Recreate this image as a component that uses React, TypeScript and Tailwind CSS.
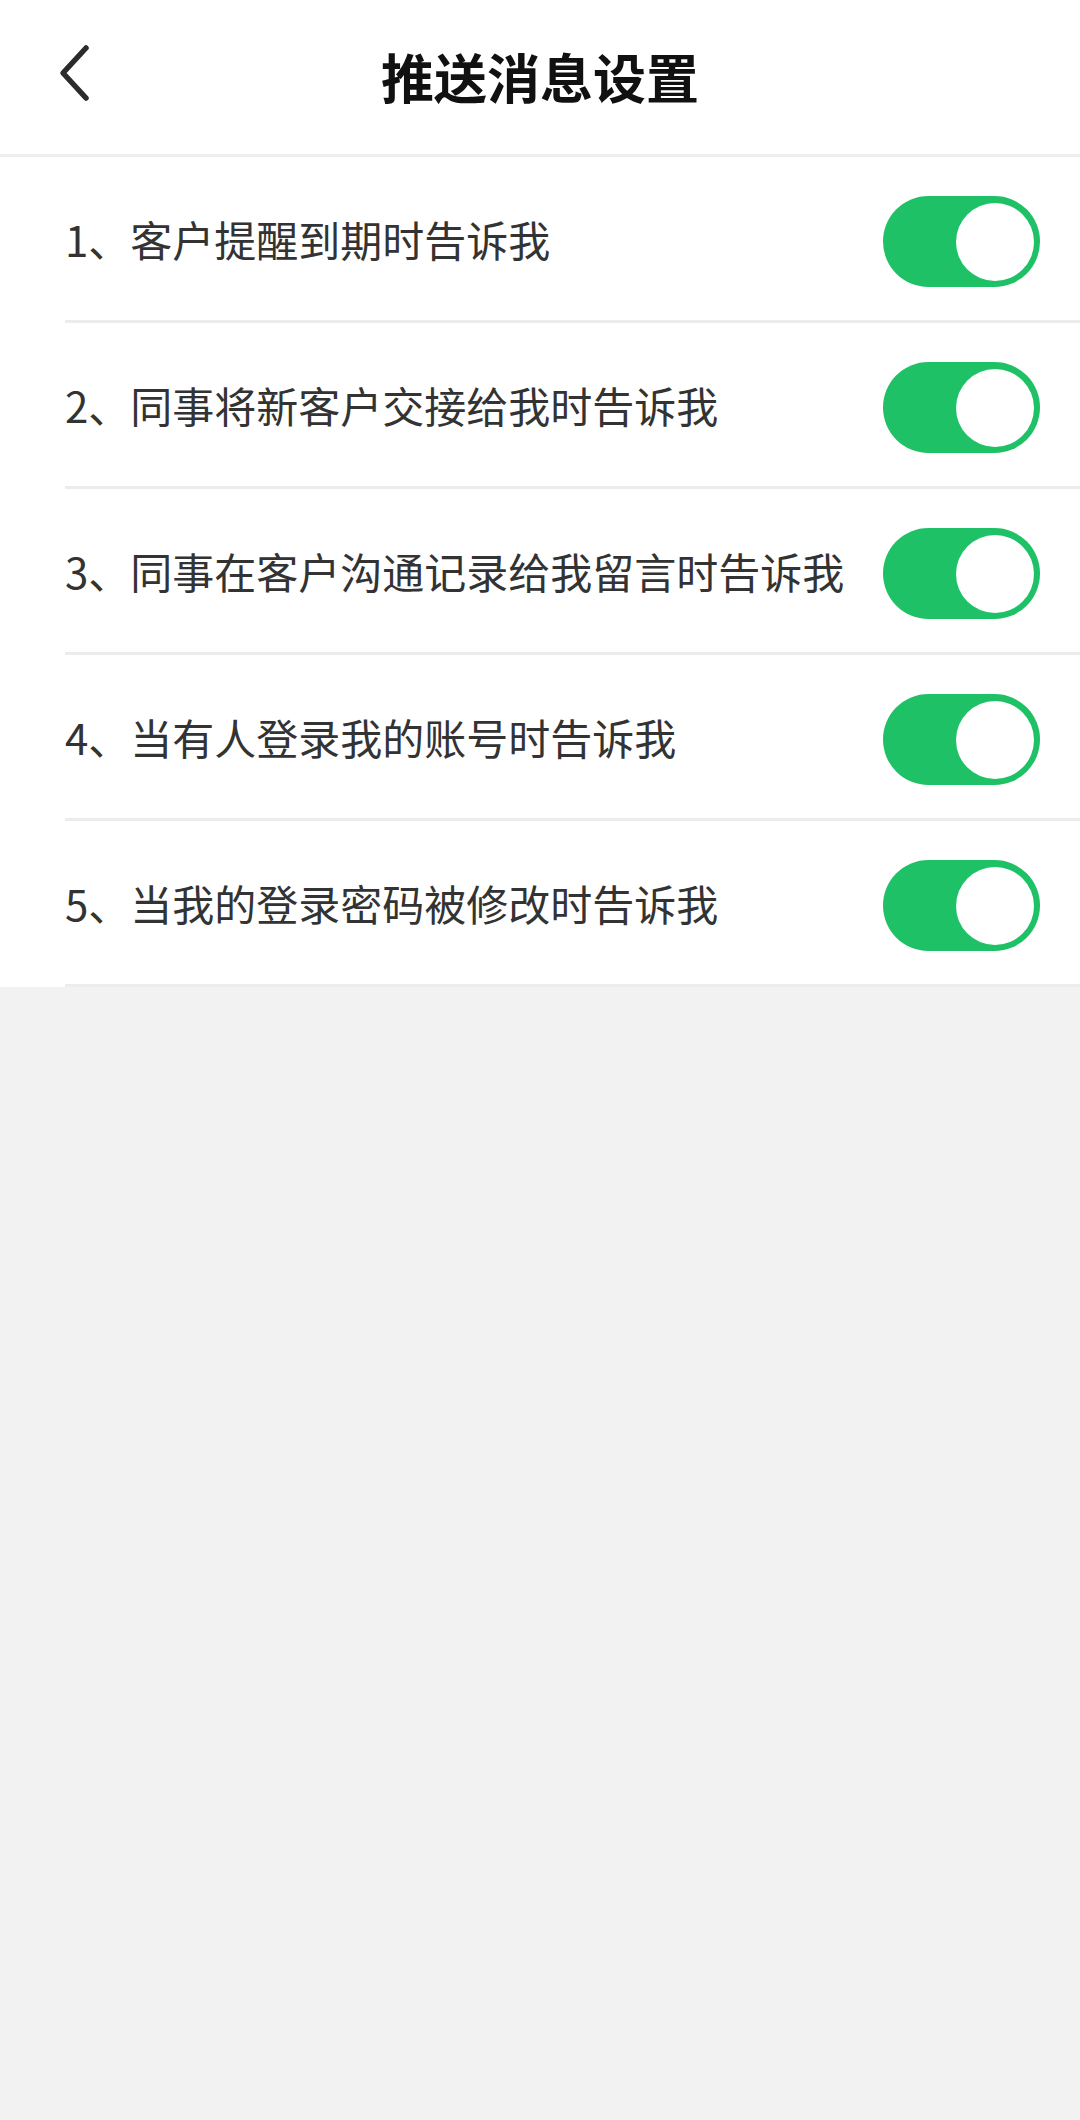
import React, { useState } from 'react';

const items = [
  '1、客户提醒到期时告诉我',
  '2、同事将新客户交接给我时告诉我',
  '3、同事在客户沟通记录给我留言时告诉我',
  '4、当有人登录我的账号时告诉我',
  '5、当我的登录密码被修改时告诉我',
];

const Toggle: React.FC<{ on: boolean; onClick: () => void }> = ({ on, onClick }) => (
  <button
    onClick={onClick}
    className={`w-[157px] h-[91px] mt-[6px] rounded-full shrink-0 flex items-center ${on ? 'bg-[#1fc166] justify-end' : 'bg-[#e5e5e5] justify-start'} px-[6px]`}
  >
    <span className="block w-[78px] h-[78px] rounded-full bg-white" />
  </button>
);

export default function App() {
  const [states, setStates] = useState<boolean[]>(items.map(() => true));

  return (
    <div
      className="w-[1080px] h-[2120px] bg-[#f2f2f2] flex flex-col"
      style={{ fontFamily: '"Noto Sans CJK SC", "Noto Sans", sans-serif' }}
    >
      {/* Header */}
      <div className="h-[157px] bg-white border-b-[3px] border-[#eeeeee] flex items-center relative shrink-0">
        <button className="absolute left-[56px] top-[44px] w-[40px] h-[58px] flex items-center justify-center">
          <svg width="36" height="58" viewBox="0 0 36 58" fill="none">
            <path d="M28 4 L5 29 L28 54" stroke="#2b2b2b" strokeWidth="5.5" strokeLinecap="round" strokeLinejoin="round" />
          </svg>
        </button>
        <h1 className="w-full text-center text-[53px] font-bold text-[#111111] leading-none -mt-[2px]">推送消息设置</h1>
      </div>

      {/* List */}
      <div className="bg-white">
        {items.map((label, i) => (
          <div key={label} className="pl-[65px]">
            <div className="h-[166px] border-b-[3px] border-[#ececec] flex items-center justify-between pr-[40px]">
              <span className="text-[42px] text-[#333333] leading-none">{label}</span>
              <Toggle
                on={states[i]}
                onClick={() => setStates(s => s.map((v, j) => (j === i ? !v : v)))}
              />
            </div>
          </div>
        ))}
      </div>
    </div>
  );
}
